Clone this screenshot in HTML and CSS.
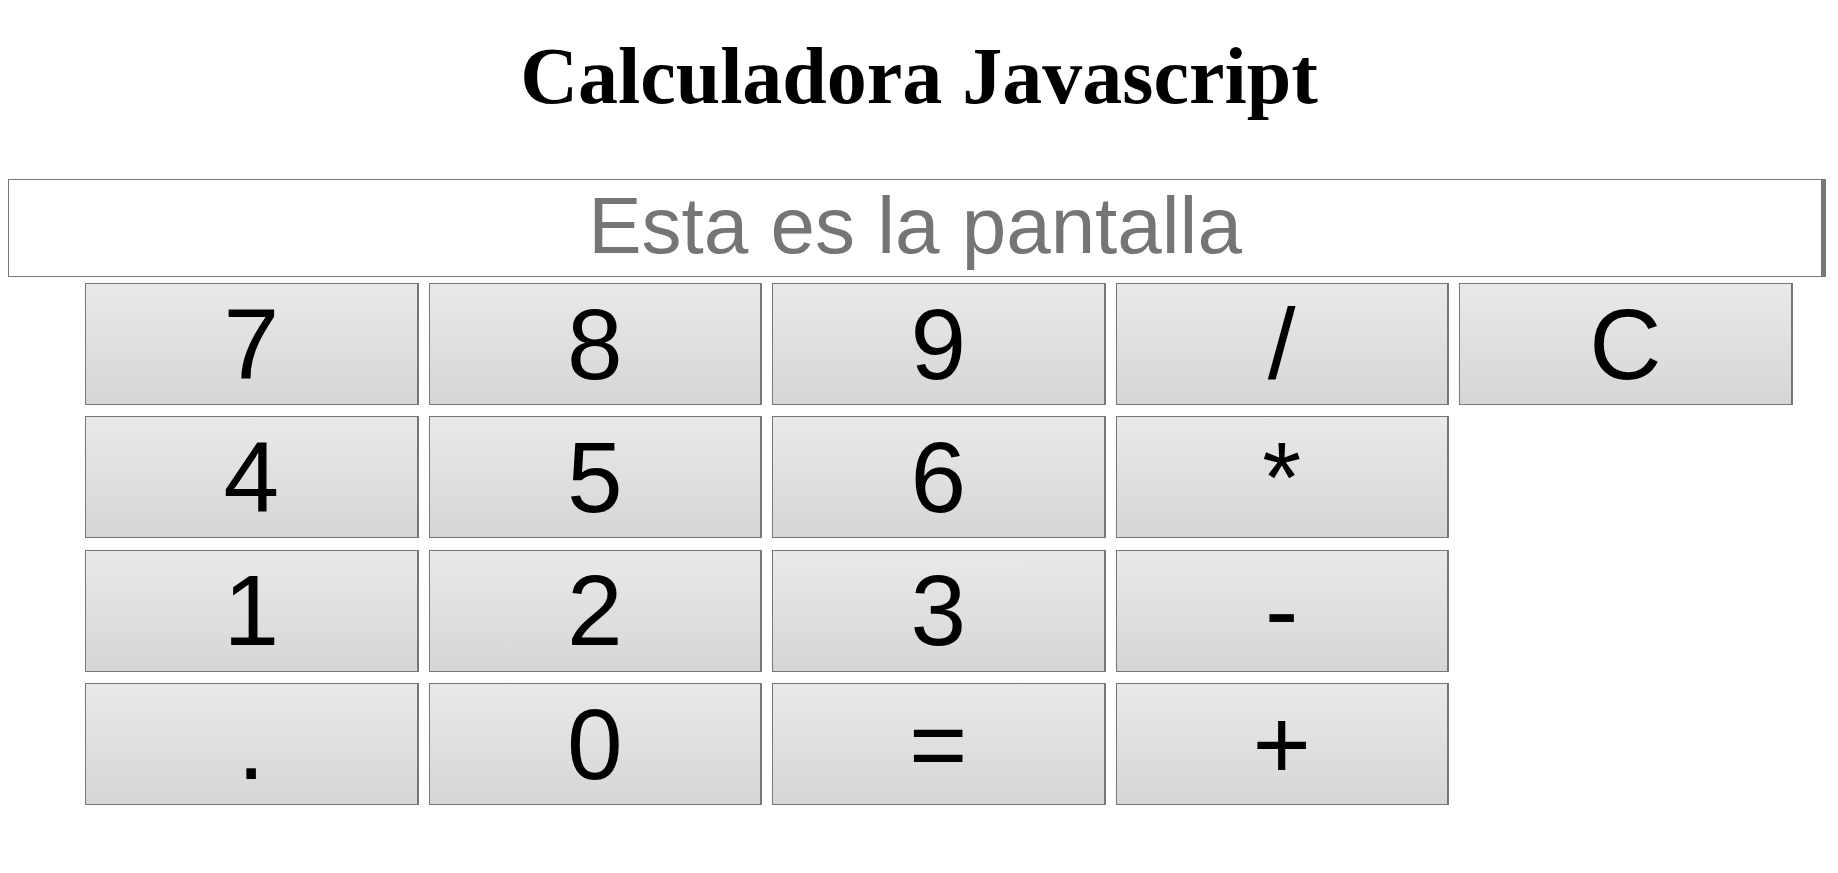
FILE: index.html
```html
<!DOCTYPE html>
<html lang="es">
<head>
<meta charset="utf-8">
<title>Calculadora Javascript</title>
<link rel="stylesheet" href="styles.css">
</head>
<body>
<h1 class="titulo">Calculadora Javascript</h1>
<div class="pantalla">Esta es la pantalla</div>
<div class="teclado">
  <button class="tecla">7</button>
  <button class="tecla">8</button>
  <button class="tecla">9</button>
  <button class="tecla">/</button>
  <button class="tecla">C</button>
  <button class="tecla">4</button>
  <button class="tecla">5</button>
  <button class="tecla">6</button>
  <button class="tecla">*</button>
  <span class="hueco"></span>
  <button class="tecla">1</button>
  <button class="tecla">2</button>
  <button class="tecla">3</button>
  <button class="tecla">-</button>
  <span class="hueco"></span>
  <button class="tecla">.</button>
  <button class="tecla">0</button>
  <button class="tecla">=</button>
  <button class="tecla">+</button>
</div>
</body>
</html>
```

FILE: styles.css
```css
html, body {
  background: #ffffff;
}
body {
  margin: 8px;
}
.titulo {
  margin: 22px 0 57px;
  font-family: "Liberation Serif", "Times New Roman", serif;
  font-weight: bold;
  font-size: 80px;
  line-height: 92px;
  text-align: center;
  color: #000000;
}
.pantalla {
  box-sizing: border-box;
  height: 98px;
  margin-right: 4px;
  padding: 0 0 4px;
  border: 1px solid #767676;
  border-right-width: 5px;
  font-family: "Liberation Sans", Arial, sans-serif;
  font-size: 80px;
  line-height: 92px;
  text-align: center;
  color: #757575;
  background: #ffffff;
  white-space: nowrap;
}
.teclado {
  display: grid;
  grid-template-columns: repeat(5, 333.5px);
  grid-template-rows: repeat(4, 122px);
  column-gap: 10px;
  row-gap: 11.4px;
  margin-top: 6px;
  padding-left: 77px;
}
.tecla {
  box-sizing: border-box;
  width: 100%;
  height: 100%;
  margin: 0;
  padding: 0;
  border: 1px solid #767676;
  border-right-width: 2px;
  border-radius: 0;
  background: linear-gradient(#e9e9e9, #d6d6d6);
  font-family: "Liberation Sans", Arial, sans-serif;
  font-size: 100px;
  line-height: normal;
  color: #000000;
  cursor: pointer;
}
```
